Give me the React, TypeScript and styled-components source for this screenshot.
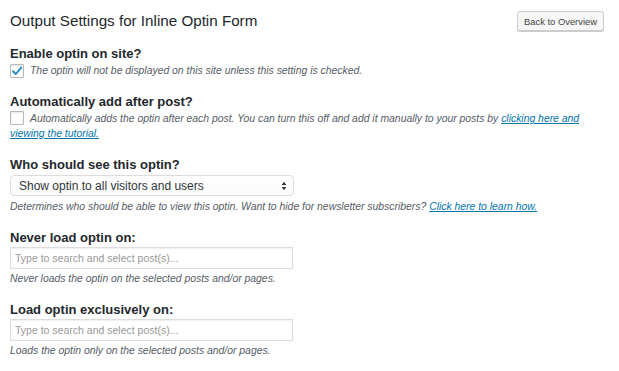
import React from "react";
import styled, { createGlobalStyle } from "styled-components";

const GlobalStyle = createGlobalStyle`
  body {
    margin: 0;
    background: #fff;
    font-family: "Liberation Sans", Arial, sans-serif;
    color: #23282d;
  }
`;

const Page = styled.div`
  width: 619px;
  height: 371px;
  padding: 11px 15px 0 10px;
  box-sizing: border-box;
  overflow: hidden;
`;

const Header = styled.div`
  display: flex;
  justify-content: space-between;
  align-items: center;
  margin-bottom: 15px;
`;

const Title = styled.h2`
  margin: 0;
  font-size: 15.2px;
  font-weight: 400;
  line-height: 18px;
  color: #23282d;
`;

const BackButton = styled.button`
  height: 20px;
  padding: 0 6px;
  font-family: "Liberation Sans", Arial, sans-serif;
  font-size: 9.4px;
  color: #444;
  background: #f7f7f7;
  border: 1px solid #ccc;
  border-radius: 3px;
  box-shadow: 0 1px 0 #ccc;
`;

const Field = styled.div`
  margin-bottom: 16px;
`;

const Label = styled.div`
  font-size: 13px;
  font-weight: 700;
  line-height: 16px;
  color: #23282d;
  margin-bottom: 1px;
`;

const CheckRow = styled.div`
  display: flex;
  align-items: center;
  gap: 6px;
`;

const Box = styled.span<{ $inline?: boolean }>`
  flex: none;
  width: 14px;
  height: 14px;
  border: 1px solid #b4b9be;
  border-radius: 1px;
  background: #fff;
  box-shadow: inset 0 1px 2px rgba(0, 0, 0, 0.1);
  box-sizing: border-box;
  display: ${(p) => (p.$inline ? "inline-block" : "flex")};
  vertical-align: -3px;
  margin-right: ${(p) => (p.$inline ? "6px" : "0")};
  align-items: center;
  justify-content: center;
`;

const Help = styled.p`
  margin: 0;
  font-size: 10.4px;
  font-style: italic;
  line-height: 15px;
  color: #555d66;
`;

const A = styled.a`
  color: #0073aa;
  text-decoration: underline;
`;

const Select = styled.div`
  width: 284px;
  height: 21px;
  box-sizing: border-box;
  border: 1px solid #ddd;
  border-radius: 4px;
  background: linear-gradient(#fff, #fafafa);
  display: flex;
  align-items: center;
  justify-content: space-between;
  padding: 0 6px 0 8px;
  margin-top: 2px;
  margin-bottom: 3px;
  font-size: 12px;
  color: #32373c;
`;

const Input = styled.div`
  width: 283px;
  height: 22px;
  box-sizing: border-box;
  border: 1px solid #ddd;
  background: #fff;
  box-shadow: inset 0 1px 2px rgba(0, 0, 0, 0.07);
  display: flex;
  align-items: center;
  padding: 0 4px;
  margin-bottom: 2px;
  font-size: 10.5px;
  color: #999;
`;

const Arrows = () => (
  <svg width="6" height="10" viewBox="0 0 6 10">
    <path d="M3 0.8 L5.3 4 L0.7 4 Z M3 9.2 L5.3 6 L0.7 6 Z" fill="#333" />
  </svg>
);

const Tick = () => (
  <svg width="12" height="12" viewBox="0 0 12 12">
    <path
      d="M2 6.3 L4.8 9 L10.2 2.6"
      fill="none"
      stroke="#1e8cbe"
      strokeWidth="1.9"
      strokeLinecap="round"
      strokeLinejoin="round"
    />
  </svg>
);

export default function App() {
  return (
    <Page>
      <GlobalStyle />
      <Header>
        <Title>Output Settings for Inline Optin Form</Title>
        <BackButton>Back to Overview</BackButton>
      </Header>

      <Field>
        <Label>Enable optin on site?</Label>
        <CheckRow>
          <Box>
            <Tick />
          </Box>
          <Help>The optin will not be displayed on this site unless this setting is checked.</Help>
        </CheckRow>
      </Field>

      <Field>
        <Label>Automatically add after post?</Label>
        <Help>
          <Box $inline />
          Automatically adds the optin after each post. You can turn this off and add it manually to your posts by{" "}
          <A href="#">clicking here and viewing the tutorial.</A>
        </Help>
      </Field>

      <Field>
        <Label>Who should see this optin?</Label>
        <Select>
          <span>Show optin to all visitors and users</span>
          <Arrows />
        </Select>
        <Help>
          Determines who should be able to view this optin. Want to hide for newsletter subscribers?{" "}
          <A href="#">Click here to learn how.</A>
        </Help>
      </Field>

      <Field>
        <Label>Never load optin on:</Label>
        <Input>Type to search and select post(s)...</Input>
        <Help>Never loads the optin on the selected posts and/or pages.</Help>
      </Field>

      <Field>
        <Label>Load optin exclusively on:</Label>
        <Input>Type to search and select post(s)...</Input>
        <Help>Loads the optin only on the selected posts and/or pages.</Help>
      </Field>
    </Page>
  );
}
